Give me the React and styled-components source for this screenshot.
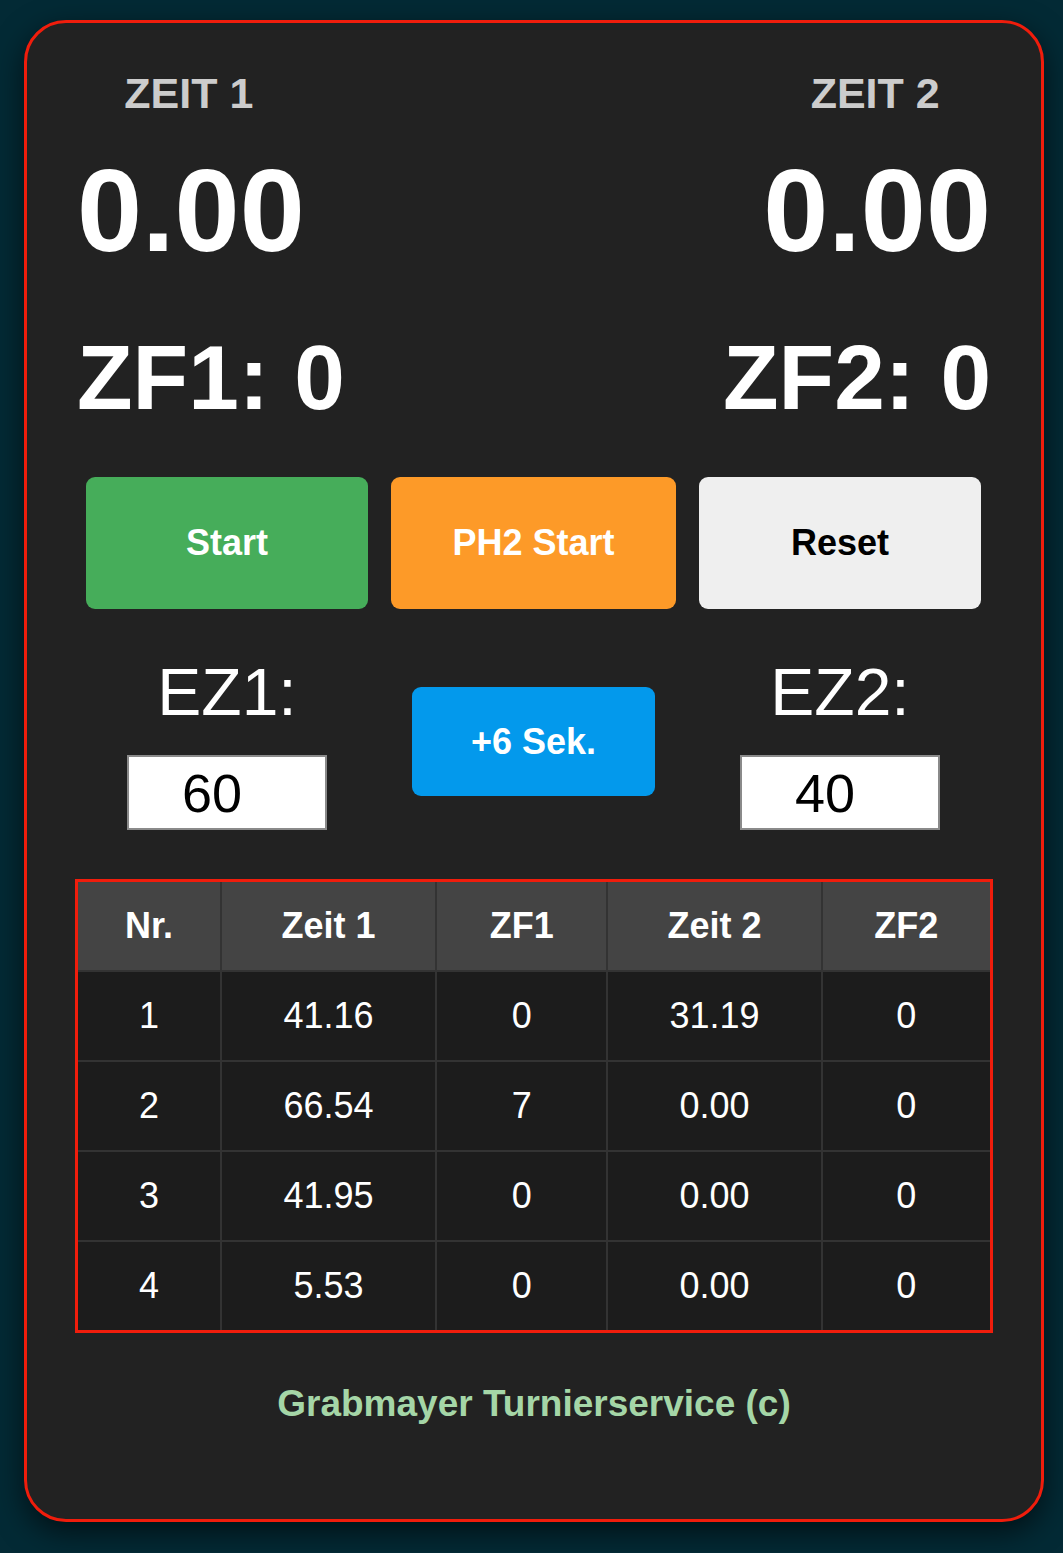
import React from 'react'
import styled, { createGlobalStyle } from 'styled-components'

const GlobalStyle = createGlobalStyle`
html, body {
  margin: 0;
  padding: 0;
  background: #032a35;
}
body {
  font-family: "Liberation Sans", Arial, sans-serif;
  padding: 20px 0 30px 24px;
}
`

const Card = styled.div`
box-sizing: border-box;
width: 1020px;
height: 1502px;
background: #222222;
border: 3px solid #f01d0c;
border-radius: 42px;
padding: 49px 50px 50px 50px;
box-shadow: 0 10px 30px rgba(0, 0, 0, 0.6);
display: flex;
flex-direction: column;
`

const TimesRow = styled.div`
display: flex;
justify-content: space-between;
`

const TimeColumn = styled.div`
display: flex;
flex-direction: column;
align-items: center;
`

const TimeLabel = styled.div`
font-size: 43px;
line-height: 1;
font-weight: bold;
color: #cccccc;
margin-right: 4px;
`

const TimeValue = styled.div`
margin-top: 37px;
font-size: 117px;
line-height: 1;
font-weight: bold;
color: #ffffff;
`

const FaultRow = styled.div`
display: flex;
justify-content: space-between;
margin-top: 63px;
`

const Fault = styled.div`
font-size: 91px;
line-height: 1;
font-weight: bold;
color: #ffffff;
`

const Grid = styled.div`
display: grid;
grid-template-columns: 282px 285px 282px;
column-gap: 23px;
margin: ${p => p.$top}px 10px 0 9px;
align-items: ${p => p.$align || 'center'};
justify-items: center;
`

const Button = styled.button`
box-sizing: border-box;
width: ${p => p.$width || '100%'};
height: ${p => p.$height || 132}px;
margin-top: ${p => p.$mt || 0}px;
border: none;
border-radius: 9px;
background: ${p => p.$bg};
color: ${p => p.$color || '#ffffff'};
font-family: "Liberation Sans", Arial, sans-serif;
font-size: 36px;
font-weight: bold;
cursor: pointer;
`

const EzColumn = styled.div`
display: flex;
flex-direction: column;
align-items: center;
`

const EzLabel = styled.div`
font-size: 66px;
line-height: 1;
color: #ffffff;
`

const EzInput = styled.input`
box-sizing: border-box;
margin-top: 30px;
width: 200px;
height: 75px;
border: 2px solid #8a8a8a;
background: #ffffff;
color: #000000;
font-family: "Liberation Sans", Arial, sans-serif;
font-size: 54px;
text-align: center;
padding: 0 30px 0 0;
outline: none;
`

const Table = styled.table`
box-sizing: border-box;
margin: 49px 0 0 -2px;
width: calc(100% + 4px);
border-collapse: collapse;
border: 3px solid #f01d0c;
table-layout: fixed;
`

const Th = styled.th`
width: ${p => p.$w}%;
height: 88px;
background: #444444;
color: #ffffff;
font-size: 36px;
font-weight: bold;
border: 2px solid #333333;
padding: 0;
`

const Td = styled.td`
height: 88px;
background: #1c1c1c;
color: #ffffff;
font-size: 36px;
text-align: center;
border: 2px solid #333333;
padding: 0;
`

const Footer = styled.div`
margin-top: 52px;
text-align: center;
font-size: 37px;
line-height: 1;
font-weight: bold;
color: #a5d6a7;
`

const columns = [
  { name: 'Nr.', w: 15.7 },
  { name: 'Zeit 1', w: 23.6 },
  { name: 'ZF1', w: 18.7 },
  { name: 'Zeit 2', w: 23.5 },
  { name: 'ZF2', w: 18.5 },
]

const rows = [
  [1, '41.16', 0, '31.19', 0],
  [2, '66.54', 7, '0.00', 0],
  [3, '41.95', 0, '0.00', 0],
  [4, '5.53', 0, '0.00', 0],
]

const App = () => {
  return (
    <>
      <GlobalStyle />
      <Card>
        <TimesRow>
          <TimeColumn>
            <TimeLabel>ZEIT 1</TimeLabel>
            <TimeValue>0.00</TimeValue>
          </TimeColumn>
          <TimeColumn>
            <TimeLabel>ZEIT 2</TimeLabel>
            <TimeValue>0.00</TimeValue>
          </TimeColumn>
        </TimesRow>
        <FaultRow>
          <Fault>ZF1: 0</Fault>
          <Fault>ZF2: 0</Fault>
        </FaultRow>
        <Grid $top={54}>
          <Button $bg="#46ad5a">Start</Button>
          <Button $bg="#fd9a28">PH2 Start</Button>
          <Button $bg="#efefef" $color="#000000">Reset</Button>
        </Grid>
        <Grid $top={50} $align="start">
          <EzColumn>
            <EzLabel>EZ1:</EzLabel>
            <EzInput type="text" defaultValue="60" />
          </EzColumn>
          <Button $bg="#0399ec" $width="243px" $height={109} $mt={28}>+6 Sek.</Button>
          <EzColumn>
            <EzLabel>EZ2:</EzLabel>
            <EzInput type="text" defaultValue="40" />
          </EzColumn>
        </Grid>
        <Table>
          <thead>
            <tr>
              {columns.map(c => (
                <Th key={c.name} $w={c.w}>{c.name}</Th>
              ))}
            </tr>
          </thead>
          <tbody>
            {rows.map(r => (
              <tr key={r[0]}>
                {r.map((v, i) => (
                  <Td key={i}>{v}</Td>
                ))}
              </tr>
            ))}
          </tbody>
        </Table>
        <Footer>Grabmayer Turnierservice (c)</Footer>
      </Card>
    </>
  )
}

export default App
